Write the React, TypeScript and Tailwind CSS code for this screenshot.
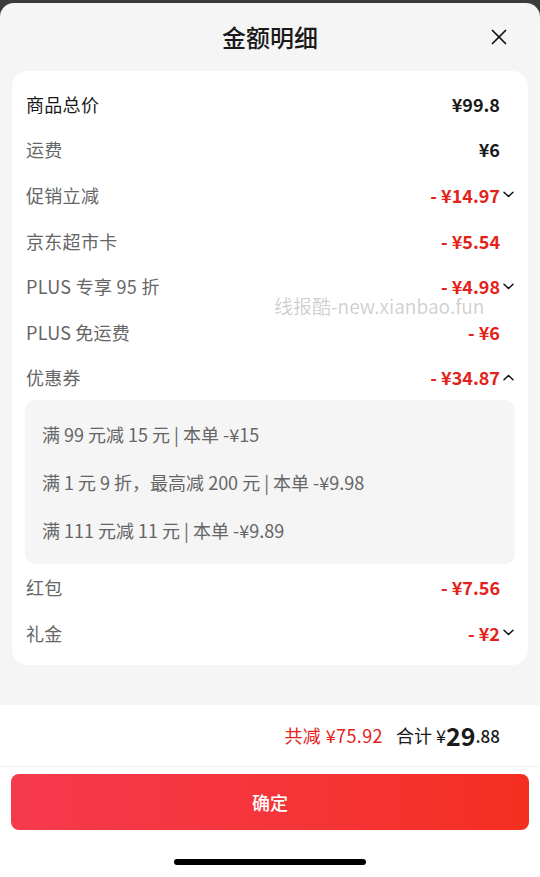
import { X } from "lucide-react";

const font = { fontFamily: '"Noto Sans CJK SC", "Noto Sans", sans-serif' };

type Row = { label: string; value: string; red?: boolean; strong?: boolean; arrow?: "down" | "up" };

const topRows: Row[] = [
  { label: "商品总价", value: "¥99.8", strong: true },
  { label: "运费", value: "¥6" },
  { label: "促销立减", value: "- ¥14.97", red: true, arrow: "down" },
  { label: "京东超市卡", value: "- ¥5.54", red: true },
  { label: "PLUS 专享 95 折", value: "- ¥4.98", red: true, arrow: "down" },
  { label: "PLUS\u2009免运费", value: "- ¥6", red: true },
  { label: "优惠券", value: "- ¥34.87", red: true, arrow: "up" },
];

const bottomRows: Row[] = [
  { label: "红包", value: "- ¥7.56", red: true },
  { label: "礼金", value: "- ¥2", red: true, arrow: "down" },
];

const coupons = [
  "满 99 元减 15 元 | 本单 -¥15",
  "满 1 元 9 折，最高减 200 元 | 本单 -¥9.98",
  "满 111 元减 11 元 | 本单 -¥9.89",
];

function Chevron({ dir }: { dir: "down" | "up" }) {
  return (
    <svg width="11" height="7" viewBox="0 0 11 7" fill="none" className="ml-[3px] -mr-[14px]">
      <path
        d={dir === "down" ? "M1 1.2 5.5 5.5 10 1.2" : "M1 5.8 5.5 1.5 10 5.8"}
        stroke="#111"
        strokeWidth="1.5"
        strokeLinecap="round"
        strokeLinejoin="round"
      />
    </svg>
  );
}

function PriceRow({ r }: { r: Row }) {
  return (
    <div className="flex h-[45.6px] items-center justify-between pl-[14px] pr-[28px]">
      <span
        className={`text-[18px] leading-[20px] tracking-[0.3px] ${r.strong ? "text-[#1a1a1a]" : "text-[#666]"}`}
      >
        {r.label}
      </span>
      <span className="flex items-center">
        <span
          className={`text-[18px] leading-[20px] ${r.red ? "font-bold text-[#e3231a]" : "font-semibold text-[#1a1a1a]"}`}
        >
          {r.value}
        </span>
        {r.arrow && <Chevron dir={r.arrow} />}
      </span>
    </div>
  );
}

export default function App() {
  return (
    <div className="h-screen w-full bg-[#3b3b3b] pt-[3px]" style={font}>
      <div className="relative flex h-[874px] flex-col overflow-hidden rounded-t-[14px] bg-[#f5f5f5]">
        <div className="relative flex h-[68px] items-center justify-center">
          <h1 className="text-[24px] font-medium text-[#1a1a1a]">金额明细</h1>
          <X className="absolute right-[28px] top-[21px]" size={26} strokeWidth={1.6} color="#111" />
        </div>

        <div className="mx-[12px] rounded-[16px] bg-white pb-[10px] pt-[10px]">
          {topRows.map((r) => (
            <PriceRow key={r.label} r={r} />
          ))}
          <div className="mx-[13px] rounded-[10px] bg-[#f5f5f5] py-[10px]">
            {coupons.map((c) => (
              <div key={c} className="flex h-[48px] items-center pl-[17px] text-[18px] text-[#666]">
                {c}
              </div>
            ))}
          </div>
          {bottomRows.map((r) => (
            <PriceRow key={r.label} r={r} />
          ))}
        </div>

        <div className="mt-[40px] flex flex-1 flex-col bg-white">
          <div className="flex h-[62px] items-center justify-end border-b border-[#f0f0f0] pr-[40px]">
            <span className="text-[18px] tracking-[0.4px] text-[#e3231a]">共减 ¥75.92</span>
            <span className="ml-[13px] text-[18px] text-[#1a1a1a]">合计 ¥</span>
            <span className="text-[25px] font-bold leading-none text-[#1a1a1a]">29</span>
            <span className="text-[17px] font-medium text-[#1a1a1a]">.88</span>
          </div>
          <div className="px-[11px] pt-[7px]">
            <div className="flex h-[56px] items-center justify-center rounded-[8px] bg-gradient-to-r from-[#f63a4d] to-[#f42f1f] text-[18px] font-medium text-white">
              确定
            </div>
          </div>
          <div className="mt-auto flex justify-center pb-[12px]">
            <div className="h-[6px] w-[192px] rounded-full bg-black" />
          </div>
        </div>

        <div className="pointer-events-none absolute left-[274px] top-[295px] text-[19px] leading-[16px] text-black/20">
          线报酷-new.xianbao.fun
        </div>
      </div>
    </div>
  );
}
